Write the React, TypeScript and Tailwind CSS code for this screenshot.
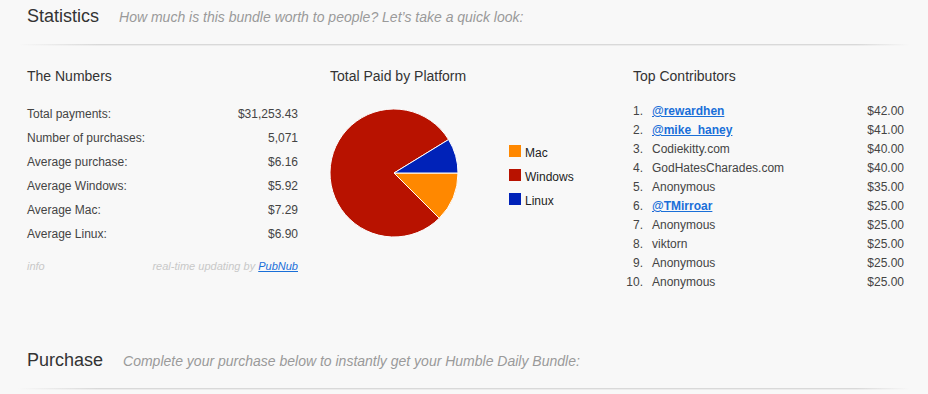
const numbers = [
  { label: "Total payments:", value: "$31,253.43" },
  { label: "Number of purchases:", value: "5,071" },
  { label: "Average purchase:", value: "$6.16" },
  { label: "Average Windows:", value: "$5.92" },
  { label: "Average Mac:", value: "$7.29" },
  { label: "Average Linux:", value: "$6.90" },
];

const contributors = [
  { name: "@rewardhen", amount: "$42.00", link: true },
  { name: "@mike_haney", amount: "$41.00", link: true },
  { name: "Codiekitty.com", amount: "$40.00" },
  { name: "GodHatesCharades.com", amount: "$40.00" },
  { name: "Anonymous", amount: "$35.00" },
  { name: "@TMirroar", amount: "$25.00", link: true },
  { name: "Anonymous", amount: "$25.00" },
  { name: "viktorn", amount: "$25.00" },
  { name: "Anonymous", amount: "$25.00" },
  { name: "Anonymous", amount: "$25.00" },
];

const legend = [
  { label: "Mac", color: "bg-[#ff8800]" },
  { label: "Windows", color: "bg-[#b81200]" },
  { label: "Linux", color: "bg-[#0022b8]" },
];

function SectionHeader({ title, subtitle }: { title: string; subtitle: string }) {
  return (
    <>
      <div className="flex items-baseline px-[27px] pt-1 h-7">
        <h2 className="text-[18px] leading-6 text-[#333] mr-[20px]">{title}</h2>
        <p className="text-[14px] leading-6 italic text-[#9a9a9a]">{subtitle}</p>
      </div>
      <div className="mt-4 mx-[18px]">
        <div className="h-px bg-[linear-gradient(to_right,transparent,#d9d9d9_9%,#d9d9d9_94%,transparent)]" />
        <div className="h-px bg-[linear-gradient(to_right,transparent,#ececec_9%,#ececec_94%,transparent)]" />
      </div>
    </>
  );
}

function PieChart() {
  return (
    <svg width="128" height="128" viewBox="0 0 128 128" className="mt-[7px] shrink-0">
      <path d="M64,64 L109.25,109.25 A64,64 0 1 1 118.57,30.56 Z" fill="#b81200" stroke="#fff" strokeWidth="1" />
      <path d="M64,64 L128,64 A64,64 0 0 1 109.25,109.25 Z" fill="#ff8800" stroke="#fff" strokeWidth="1" />
      <path d="M64,64 L118.57,30.56 A64,64 0 0 1 128,64 Z" fill="#0022b8" stroke="#fff" strokeWidth="1" />
    </svg>
  );
}

export default function App() {
  return (
    <div className="w-[928px] h-[394px] overflow-hidden bg-[#f8f8f8] font-['Liberation_Sans',Arial,sans-serif]">
      <SectionHeader
        title="Statistics"
        subtitle="How much is this bundle worth to people? Let’s take a quick look:"
      />

      <div className="mt-[20px] px-[27px] grid grid-cols-[271px_271px_271px] gap-x-8">
        {/* The Numbers */}
        <div>
          <h3 className="text-[14px] leading-5 text-[#333] mb-4">The Numbers</h3>
          <div>
            {numbers.map((n) => (
              <div key={n.label} className="flex justify-between h-6 leading-6 text-[12px] text-[#444]">
                <span>{n.label}</span>
                <span>{n.value}</span>
              </div>
            ))}
          </div>
          <div className="flex justify-between mt-3 text-[11px] leading-4 italic text-[#c8c8c8]">
            <span>info</span>
            <span>
              real-time updating by{" "}
              <a href="#" className="text-[#1a6fd8] underline">
                PubNub
              </a>
            </span>
          </div>
        </div>

        {/* Total Paid by Platform */}
        <div>
          <h3 className="text-[14px] leading-5 text-[#333] mb-4">Total Paid by Platform</h3>
          <div className="flex items-start">
            <PieChart />
            <div className="ml-[51px] mt-[37px]">
              {legend.map((l) => (
                <div key={l.label} className="flex items-center h-6 gap-1 text-[12px] text-[#222]">
                  <span className={`w-3 h-3 ${l.color}`} />
                  <span className="mt-[3px]">{l.label}</span>
                </div>
              ))}
            </div>
          </div>
        </div>

        {/* Top Contributors */}
        <div>
          <h3 className="text-[14px] leading-5 text-[#333] mb-4">Top Contributors</h3>
          <ol className="mt-px">
            {contributors.map((c, i) => (
              <li key={i} className="flex h-[19px] leading-[19px] text-[12px] text-[#444]">
                <span className="w-[17px] -ml-[7px] text-right">{i + 1}.</span>
                <span className="ml-[9px]">
                  {c.link ? (
                    <a href="#" className="font-bold text-[#1a6fd8] underline">
                      {c.name}
                    </a>
                  ) : (
                    c.name
                  )}
                </span>
                <span className="flex-1 text-right">{c.amount}</span>
              </li>
            ))}
          </ol>
        </div>
      </div>

      <div className="mt-[52px]">
        <SectionHeader
          title="Purchase"
          subtitle="Complete your purchase below to instantly get your Humble Daily Bundle:"
        />
      </div>
    </div>
  );
}
